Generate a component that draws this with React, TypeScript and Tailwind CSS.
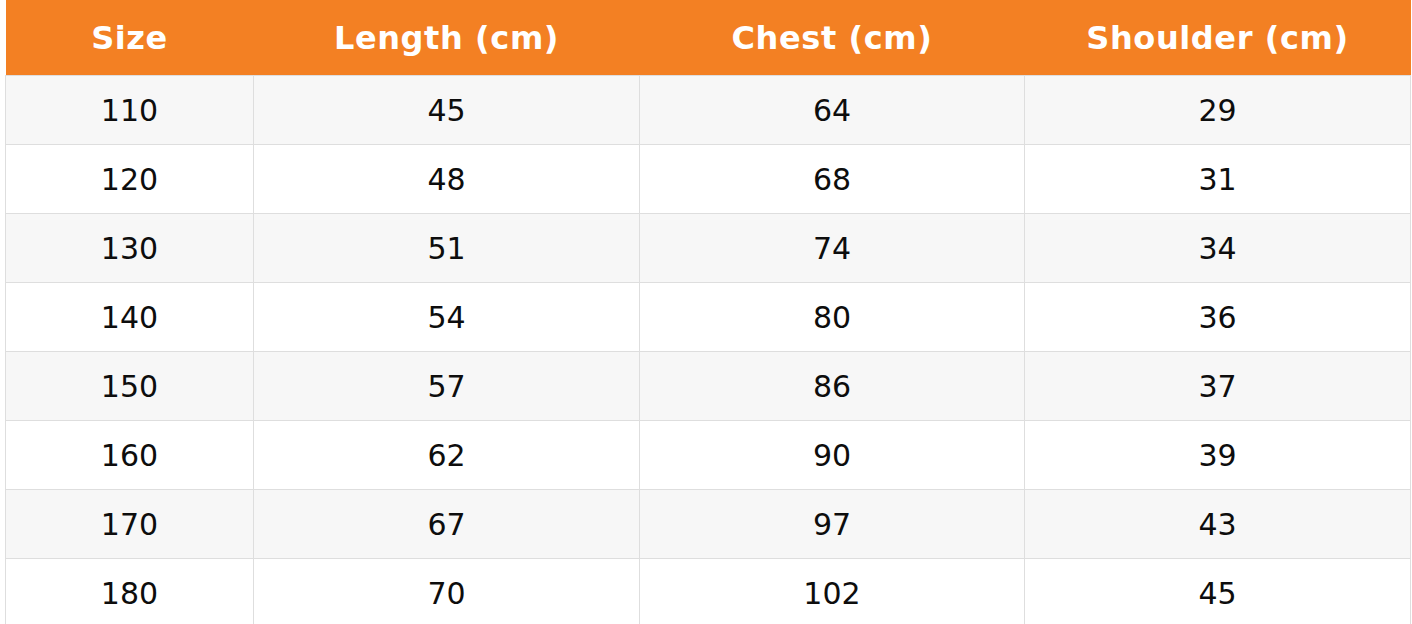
const headers = ["Size", "Length (cm)", "Chest (cm)", "Shoulder (cm)"];

const rows = [
  ["110", "45", "64", "29"],
  ["120", "48", "68", "31"],
  ["130", "51", "74", "34"],
  ["140", "54", "80", "36"],
  ["150", "57", "86", "37"],
  ["160", "62", "90", "39"],
  ["170", "67", "97", "43"],
  ["180", "70", "102", "45"],
];

export default function App() {
  return (
    <div className="w-[1412px] h-[624px] overflow-hidden bg-white pl-[5px] pr-[2px] font-['DejaVu_Sans',sans-serif]">
      <table className="w-[1405px] border-collapse table-fixed">
        <colgroup>
          <col className="w-[248px]" />
          <col className="w-[386px]" />
          <col className="w-[385px]" />
          <col className="w-[386px]" />
        </colgroup>
        <thead>
          <tr className="bg-[#f38023] h-[75px]">
            {headers.map((h) => (
              <th key={h} className="text-white font-bold text-[32px] tracking-[0.6px] text-center p-0 pt-[2px]">
                {h}
              </th>
            ))}
          </tr>
        </thead>
        <tbody>
          {rows.map((r, i) => (
            <tr key={r[0]} className={`h-[69px] ${i % 2 === 0 ? "bg-[#f7f7f7]" : "bg-white"}`}>
              {r.map((c, j) => (
                <td key={j} className="border border-[#dedede] text-center text-[30px] text-[#0d0d0d] p-0 pt-[2px]">
                  {c}
                </td>
              ))}
            </tr>
          ))}
        </tbody>
      </table>
    </div>
  );
}
